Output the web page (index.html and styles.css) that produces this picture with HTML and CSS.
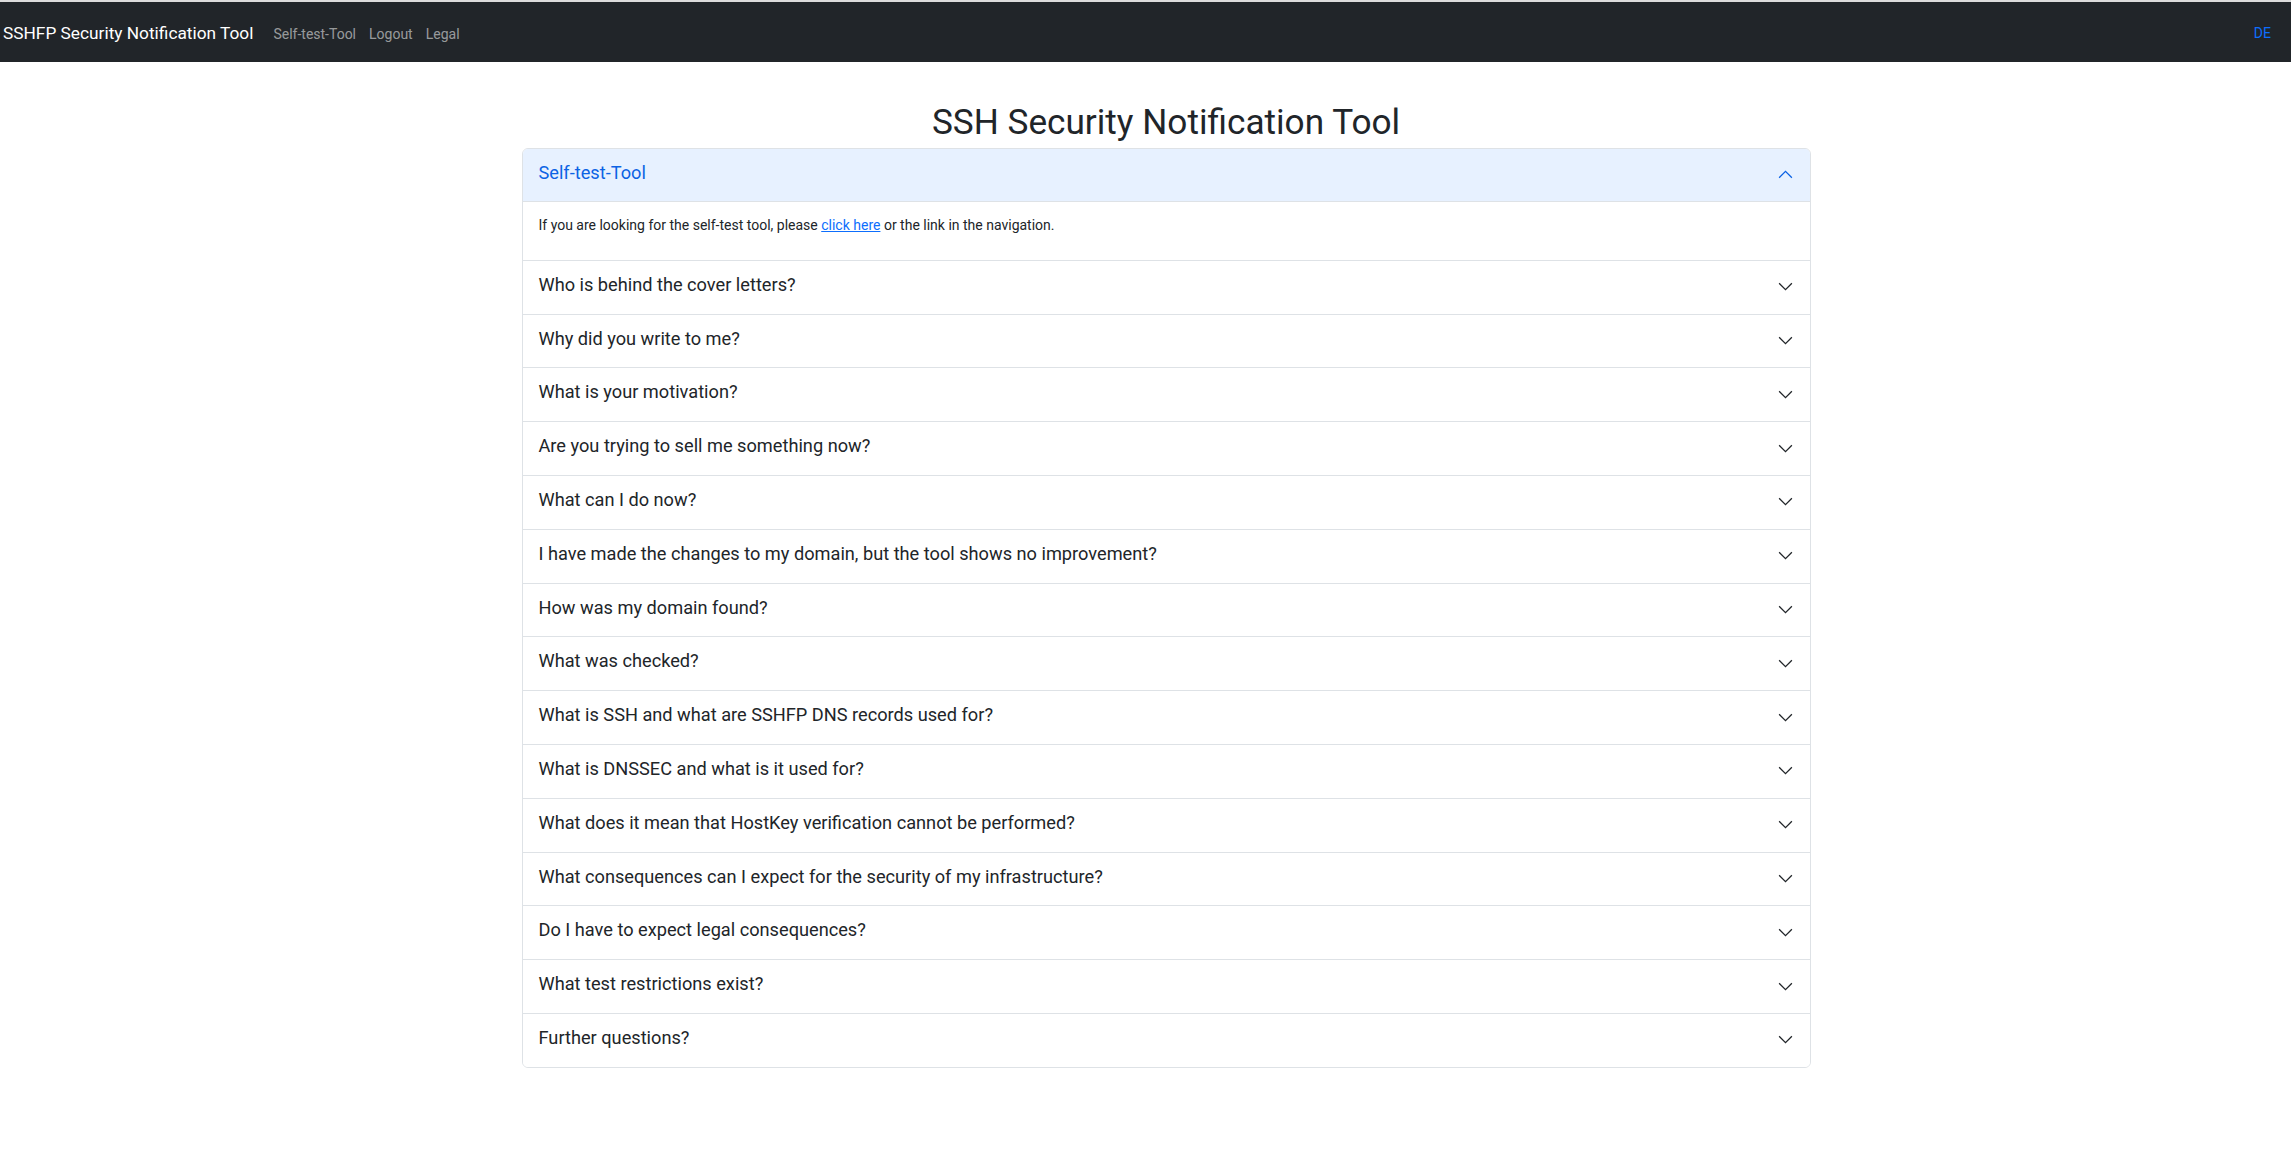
FILE: index.html
```html
<!DOCTYPE html>
<html lang="en">
<head>
<meta charset="utf-8">
<title>SSH Security Notification Tool</title>
<link rel="stylesheet" href="styles.css">
</head>
<body>
<nav class="navbar">
  <a class="brand" href="#">SSHFP Security Notification Tool</a>
  <ul class="nav-links">
    <li><a href="#">Self-test-Tool</a></li>
    <li><a href="#">Logout</a></li>
    <li><a href="#">Legal</a></li>
  </ul>
  <a class="lang" href="#">DE</a>
</nav>
<main class="container">
  <h1 class="title">SSH Security Notification Tool</h1>
  <div class="accordion">
    <div class="item">
      <button class="acc-btn active"><span>Self-test-Tool</span><svg class="chev" viewBox="0 0 16 16"><path d="M2 5L8 11L14 5"/></svg></button>
      <div class="acc-body">If you are looking for the self-test tool, please <a href="#">click here</a> or the link in the navigation.</div>
    </div>
    <div class="item"><button class="acc-btn"><span>Who is behind the cover letters?</span><svg class="chev" viewBox="0 0 16 16"><path d="M2 5L8 11L14 5"/></svg></button></div>
    <div class="item"><button class="acc-btn"><span>Why did you write to me?</span><svg class="chev" viewBox="0 0 16 16"><path d="M2 5L8 11L14 5"/></svg></button></div>
    <div class="item"><button class="acc-btn"><span>What is your motivation?</span><svg class="chev" viewBox="0 0 16 16"><path d="M2 5L8 11L14 5"/></svg></button></div>
    <div class="item"><button class="acc-btn"><span>Are you trying to sell me something now?</span><svg class="chev" viewBox="0 0 16 16"><path d="M2 5L8 11L14 5"/></svg></button></div>
    <div class="item"><button class="acc-btn"><span>What can I do now?</span><svg class="chev" viewBox="0 0 16 16"><path d="M2 5L8 11L14 5"/></svg></button></div>
    <div class="item"><button class="acc-btn"><span>I have made the changes to my domain, but the tool shows no improvement?</span><svg class="chev" viewBox="0 0 16 16"><path d="M2 5L8 11L14 5"/></svg></button></div>
    <div class="item"><button class="acc-btn"><span>How was my domain found?</span><svg class="chev" viewBox="0 0 16 16"><path d="M2 5L8 11L14 5"/></svg></button></div>
    <div class="item"><button class="acc-btn"><span>What was checked?</span><svg class="chev" viewBox="0 0 16 16"><path d="M2 5L8 11L14 5"/></svg></button></div>
    <div class="item"><button class="acc-btn"><span>What is SSH and what are SSHFP DNS records used for?</span><svg class="chev" viewBox="0 0 16 16"><path d="M2 5L8 11L14 5"/></svg></button></div>
    <div class="item"><button class="acc-btn"><span>What is DNSSEC and what is it used for?</span><svg class="chev" viewBox="0 0 16 16"><path d="M2 5L8 11L14 5"/></svg></button></div>
    <div class="item"><button class="acc-btn"><span>What does it mean that HostKey verification cannot be performed?</span><svg class="chev" viewBox="0 0 16 16"><path d="M2 5L8 11L14 5"/></svg></button></div>
    <div class="item"><button class="acc-btn"><span>What consequences can I expect for the security of my infrastructure?</span><svg class="chev" viewBox="0 0 16 16"><path d="M2 5L8 11L14 5"/></svg></button></div>
    <div class="item"><button class="acc-btn"><span>Do I have to expect legal consequences?</span><svg class="chev" viewBox="0 0 16 16"><path d="M2 5L8 11L14 5"/></svg></button></div>
    <div class="item"><button class="acc-btn"><span>What test restrictions exist?</span><svg class="chev" viewBox="0 0 16 16"><path d="M2 5L8 11L14 5"/></svg></button></div>
    <div class="item"><button class="acc-btn"><span>Further questions?</span><svg class="chev" viewBox="0 0 16 16"><path d="M2 5L8 11L14 5"/></svg></button></div>
  </div>
</main>
</body>
</html>
```
FILE: styles.css
```css
* { box-sizing: border-box; }
html, body { margin: 0; padding: 0; }
body {
  font-family: Roboto, "Noto Sans", sans-serif;
  color: #212529;
  background: #fff;
  border-top: 2px solid #dcdcdc;
}
.navbar {
  display: flex;
  align-items: center;
  height: 60px;
  background: #212529;
  padding: 2px 20px 0 3px;
}
.brand {
  color: #fff;
  text-decoration: none;
  font-size: 17.3px;
  margin-right: 20px;
}
.nav-links {
  display: flex;
  gap: 13px;
  list-style: none;
  margin: 0;
  padding: 0;
}
.nav-links a {
  color: rgba(255,255,255,0.55);
  text-decoration: none;
  font-size: 14px;
}
.lang {
  margin-left: auto;
  color: #0d6efd;
  text-decoration: none;
  font-size: 14px;
}
.container {
  width: 1289px;
  margin-left: calc(50% - 624px);
  padding-top: 36px;
}
.title {
  margin: 0 0 2px;
  text-align: center;
  font-size: 35.2px;
  font-weight: 400;
  line-height: 48px;
}
.accordion {
  border: 1px solid #dee2e6;
  border-radius: 6px;
  overflow: hidden;
}
.item + .item { border-top: 1px solid #dee2e6; }
.acc-btn {
  display: flex;
  align-items: center;
  width: 100%;
  border: 0;
  background: #fff;
  padding: 13px 16px 17px 16px;
  font-family: inherit;
  font-size: 18.2px;
  line-height: 22.8px;
  color: #212529;
  text-align: left;
}
.acc-btn.active {
  background: #e7f1ff;
  color: #0c63e4;
  box-shadow: inset 0 -1px 0 #dee2e6;
}
.chev {
  width: 17px;
  height: 17px;
  margin-left: auto;
  margin-top: 3px;
  flex-shrink: 0;
  fill: none;
  stroke: #212529;
  stroke-width: 1.2;
}
.acc-btn.active .chev {
  stroke: #0c63e4;
  transform: rotate(180deg);
}
.acc-body {
  padding: 13px 16px 25px;
  font-size: 14px;
  line-height: 20px;
}
.acc-body a { color: #0d6efd; }
```
